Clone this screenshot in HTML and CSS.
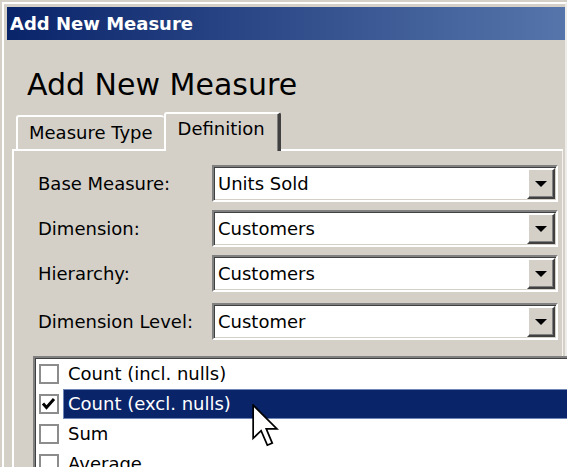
FILE: index.html
```html
<!DOCTYPE html>
<html lang="en">
<head>
    <meta charset="UTF-8">
    <meta name="viewport" content="width=device-width, initial-scale=1.0">
    <title>Add New Measure</title>
    <link rel="stylesheet" href="styles.css">
</head>
<body>
    <div class="window">
        <div class="frame">
            <div class="titlebar">Add New Measure</div>

            <h1 class="heading">Add New Measure</h1>

            <div class="tabs">
                <div class="tab">Measure Type</div>
                <div class="tab active">Definition</div>
            </div>

            <div class="panel">
                <div class="form">
                    <label>Base Measure:</label>
                    <div class="combo"><span>Units Sold</span><b class="drop"><i></i></b></div>

                    <label>Dimension:</label>
                    <div class="combo"><span>Customers</span><b class="drop"><i></i></b></div>

                    <label>Hierarchy:</label>
                    <div class="combo"><span>Customers</span><b class="drop"><i></i></b></div>

                    <label>Dimension Level:</label>
                    <div class="combo"><span>Customer</span><b class="drop"><i></i></b></div>
                </div>

                <ul class="listbox">
                    <li><span class="check"></span><span class="item">Count (incl. nulls)</span></li>
                    <li>
                        <span class="check">
                            <svg width="16" height="16" viewBox="0 0 16 16"><polyline points="2,7.5 5.5,11.5 13,3" fill="none" stroke="#000" stroke-width="3"/></svg>
                        </span>
                        <span class="item selected">Count (excl. nulls)</span>
                    </li>
                    <li><span class="check"></span><span class="item">Sum</span></li>
                    <li><span class="check"></span><span class="item">Average</span></li>
                </ul>
            </div>
        </div>
    </div>

    <!-- mouse pointer over the selected row -->
    <svg class="cursor" width="27" height="44" viewBox="0 0 12.5 20.5">
        <polygon points="0.5,0.5 0.5,16 4.2,12.4 7.1,19.2 9.4,18.2 6.6,11.6 11.6,11.6" fill="#fff" stroke="#000" stroke-width="0.8" stroke-linejoin="miter"/>
    </svg>
</body>
</html>
```

FILE: styles.css
```css
* {
    margin: 0;
    padding: 0;
    box-sizing: border-box;
}

body {
    width: 567px;
    height: 467px;
    overflow: hidden;
    position: relative;
    background-color: #d4d0c8;
    font-family: "DejaVu Sans", Tahoma, Verdana, sans-serif;
    font-size: 18px;
    color: #000;
}

.window {
    height: 100%;
    padding: 2px 0 0 2px;
}

.frame {
    height: 100%;
    border-top: 2px solid #fff;
    border-left: 2px solid #fff;
    border-right: 2px solid #eeece8;
    padding: 3px 0 0 3px;
}

.titlebar {
    height: 33px;
    line-height: 33px;
    padding-left: 3px;
    background: linear-gradient(to right, #0a246a, #5675ab);
    color: #fff;
    font-weight: bold;
    font-size: 18px;
}

.heading {
    margin: 27px 0 0 20px;
    height: 36px;
    line-height: 36px;
    font-size: 30px;
    font-weight: normal;
}

/* tabs */
.tabs {
    display: flex;
    align-items: flex-end;
    height: 37px;
    margin-top: 9px;
    padding-left: 9px;
}

.tab {
    height: 34px;
    line-height: 32px;
    padding: 0 11px;
    border-top: 2px solid #fff;
    border-left: 2px solid #fff;
    border-top-left-radius: 3px;
    border-top-right-radius: 3px;
}

.tab.active {
    position: relative;
    z-index: 1;
    height: 39px;
    margin-bottom: -2px;
    padding: 0 13px 0 12px;
    line-height: 30px;
    background-color: #d4d0c8;
    border-right: 3px solid #404040;
    box-shadow: inset -1px 0 #808080;
}

/* tab panel */
.panel {
    margin: 0 2px 0 5px;
    height: 400px;
    border-top: 2px solid #fff;
    border-left: 2px solid #fff;
    border-right: 1px solid #f4f3ef;
    padding: 14px 0 0 24px;
}

.form {
    display: grid;
    grid-template-columns: 174px 346px;
    grid-template-rows: 37px 37px 37px 37px;
    row-gap: 8px;
    align-items: center;
}

.form > :nth-child(n+7) {
    margin-top: 6px;
}

.combo {
    height: 37px;
    display: flex;
    align-items: center;
    justify-content: space-between;
    background-color: #fff;
    border-top: 2px solid #808080;
    border-left: 2px solid #808080;
    border-bottom: 2px solid #fff;
    border-right: 2px solid #fff;
    box-shadow: inset 1px 1px #404040, inset -1px -1px #d4d0c8;
    padding: 0 1px 0 4px;
}

.drop {
    width: 28px;
    height: 31px;
    display: flex;
    align-items: center;
    justify-content: center;
    background-color: #d4d0c8;
    border-top: 2px solid #fff;
    border-left: 2px solid #fff;
    border-bottom: 2px solid #404040;
    border-right: 2px solid #404040;
    box-shadow: inset -1px -1px #808080;
}

.drop i {
    width: 0;
    height: 0;
    border-left: 6px solid transparent;
    border-right: 6px solid transparent;
    border-top: 6px solid #000;
}

/* list with checkboxes */
.listbox {
    list-style: none;
    margin: 19px -12px 0 -5px;
    height: 120px;
    background-color: #fff;
    border-top: 2px solid #808080;
    border-left: 2px solid #808080;
    box-shadow: inset 1px 1px #404040;
    padding: 1px 0 0 4px;
}

.listbox li {
    display: flex;
    align-items: center;
    height: 30px;
}

.check {
    width: 20px;
    height: 20px;
    display: flex;
    align-items: center;
    justify-content: center;
    border: 2px solid #8c8c8c;
    background-color: #fff;
}

.item {
    flex: 1;
    height: 30px;
    line-height: 29px;
    margin-left: 4px;
    padding-left: 5px;
}

.item.selected {
    background-color: #0a246a;
    color: #fff;
    box-shadow: inset 0 0 0 1px #6f86b6;
}

.cursor {
    position: absolute;
    left: 252px;
    top: 404px;
}
```
